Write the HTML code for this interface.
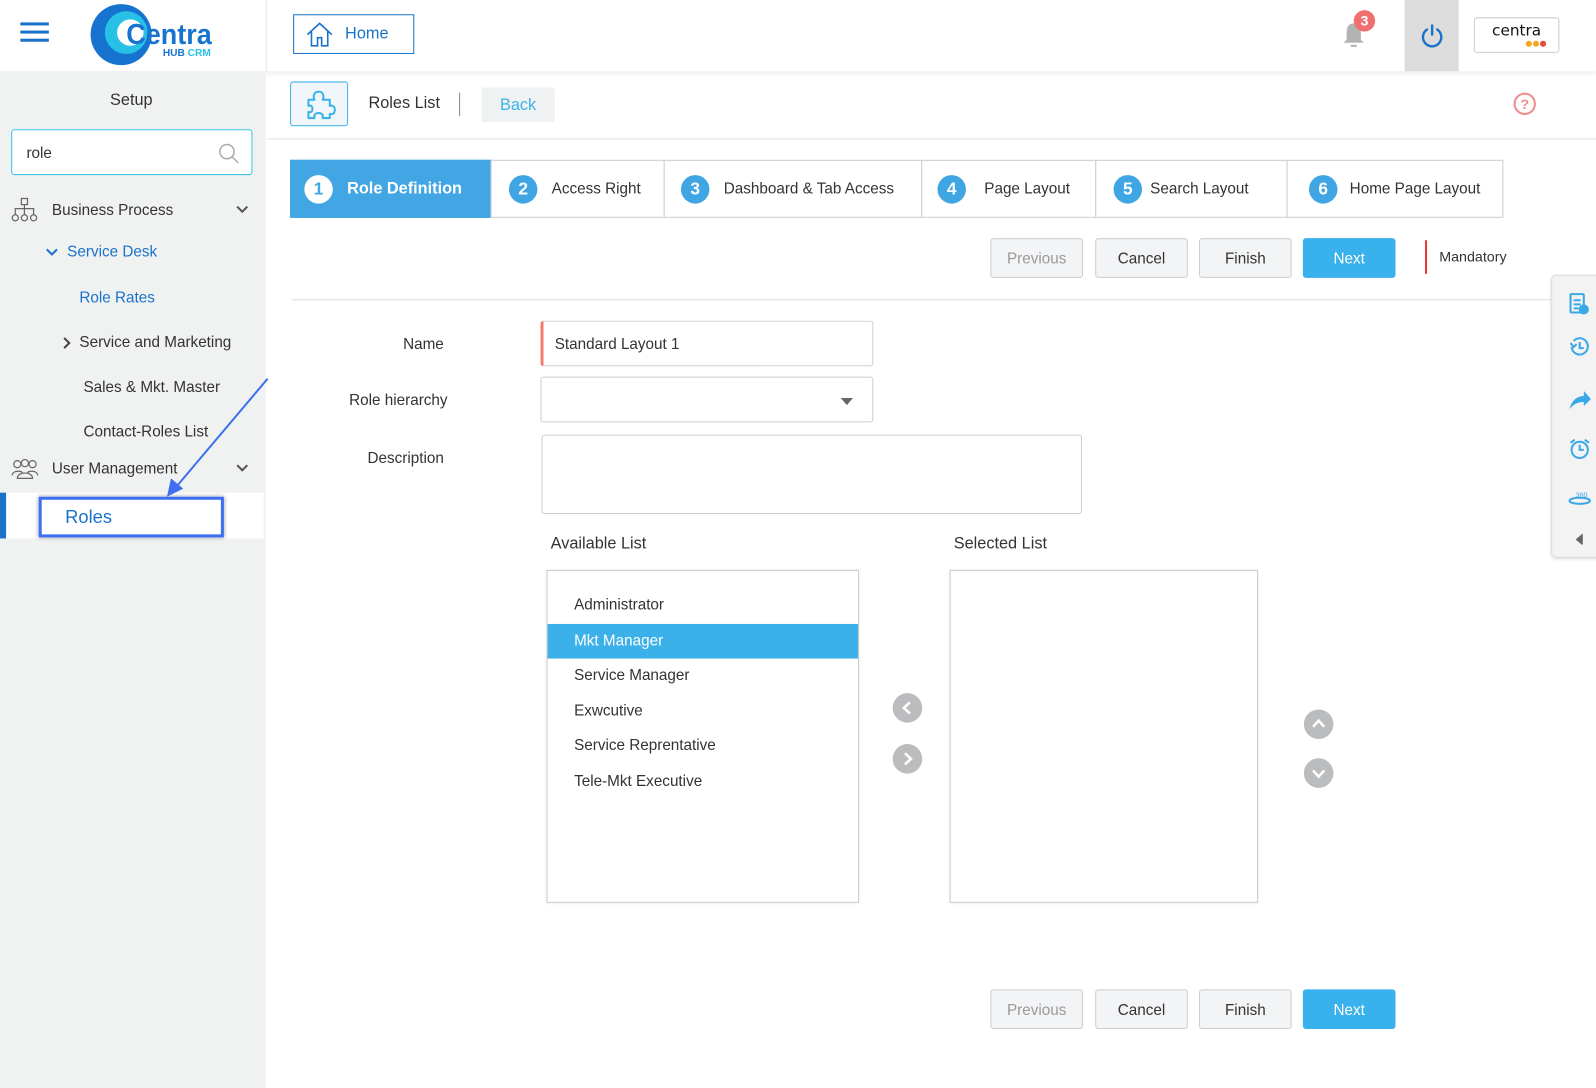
<!DOCTYPE html>
<html><head><meta charset="utf-8"><style>
html,body{margin:0;padding:0;width:1596px;height:1088px;overflow:hidden;background:#fff}
#w{position:absolute;left:0;top:0;width:1568px;height:1069px;transform:scale(1.01786);transform-origin:0 0;font-family:"Liberation Sans",sans-serif;color:#333;font-size:15px}
.a{position:absolute}
.btn{position:absolute;height:39px;width:91px;border:1px solid #ccc;border-radius:3px;background:#f3f4f6;text-align:center;line-height:39px;font-size:15px;color:#333;box-sizing:border-box}
.step{position:absolute;top:157px;height:57px;border:1px solid #ccc;box-sizing:border-box;background:#fff;display:flex;align-items:center;font-size:15px;color:#333}
.num{width:28px;height:28px;border-radius:50%;background:#3fa6e3;color:#fff;font-weight:bold;font-size:17px;display:inline-block;text-align:center;line-height:28px;margin-right:14px}
.li{position:absolute;left:26px;font-size:15px;color:#333}
.circ{position:absolute;width:29px;height:29px;border-radius:50%;background:#bbbcbe}
</style></head><body><div id="w">
<div class="a" style="left:0;top:0;width:1568px;height:70px;background:#fff;box-shadow:0 2px 5px rgba(0,0,0,.08)"></div>
<div class="a" style="left:261px;top:0;width:1px;height:70px;background:#e4e4e4"></div>
<div class="a" style="left:20px;top:22px;width:28px;height:3px;background:#1a73c9;box-shadow:0 8px 0 #1a73c9,0 16px 0 #1a73c9"></div>
<svg class="a" style="left:88px;top:2px" width="125" height="64" viewBox="0 0 125 64">
<circle cx="31" cy="32" r="30" fill="#1673cf"/><circle cx="36" cy="30" r="21" fill="#27c0e6"/><circle cx="40" cy="30" r="13" fill="#fff"/>
<text x="36" y="41" font-family="Liberation Sans" font-size="28" font-weight="bold" fill="#1673cf" textLength="84" lengthAdjust="spacingAndGlyphs">Centra</text>
<text x="72" y="53" font-family="Liberation Sans" font-size="10" font-weight="bold" fill="#1673cf">HUB <tspan fill="#27c0e6">CRM</tspan></text></svg>
<div class="a" style="left:288px;top:14px;width:119px;height:39px;border:1px solid #1a73c9;box-sizing:border-box"></div>
<svg class="a" style="left:300px;top:21px" width="28" height="26" viewBox="0 0 28 26" fill="none" stroke="#1a73c9" stroke-width="1.6"><path d="M2 13 L14 2 L26 13 M6 10 V24 H12 V16 H16 V24 H22 V10"/></svg>
<div class="a" style="left:339px;top:25px;font-size:16px;color:#1a73c9">Home</div>
<svg class="a" style="left:1318px;top:20px" width="24" height="28" viewBox="0 0 24 28"><path d="M12 3 C6 3 5 8 5 13 V19 L2 22 H22 L19 19 V13 C19 8 18 3 12 3Z M9 24 H15 V26 H9Z" fill="#b3b3b3"/></svg>
<div class="a" style="left:1330px;top:10px;width:21px;height:21px;border-radius:50%;background:#f07070;color:#fff;font-weight:bold;font-size:14px;text-align:center;line-height:21px">3</div>
<div class="a" style="left:1380px;top:0;width:53px;height:70px;background:#dcdcdc"></div>
<svg class="a" style="left:1395px;top:22px" width="24" height="26" viewBox="0 0 24 26" fill="none" stroke="#1a73c9" stroke-width="2.4" stroke-linecap="round"><path d="M12 3 V12 M7 7 A9 9 0 1 0 17 7"/></svg>
<div class="a" style="left:1448px;top:17px;width:84px;height:35px;border:1px solid #ccc;border-radius:3px;box-sizing:border-box;text-align:center">
<div style="font-size:15px;color:#111;line-height:24px;font-family:'DejaVu Sans',sans-serif">centra</div>
<div style="position:absolute;right:12px;top:22px;width:6px;height:6px;border-radius:50%;background:#f5a623;box-shadow:7px 0 0 #f5a623,14px 0 0 #e94b3c;right:26px"></div></div>
<div class="a" style="left:0;top:70px;width:261px;height:999px;background:#f0f1f1"></div>
<div class="a" style="left:0;top:90px;width:258px;text-align:center;font-size:16px;color:#333">Setup</div>
<div class="a" style="left:11px;top:127px;width:237px;height:45px;border:1px solid #3cc3e8;border-radius:3px;background:#fff;box-sizing:border-box"></div>
<div class="a" style="left:26px;top:142px;font-size:15px">role</div>
<svg class="a" style="left:214px;top:140px" width="22" height="22" viewBox="0 0 22 22" fill="none" stroke="#aaa" stroke-width="1.5"><circle cx="9" cy="9" r="7"/><path d="M14 14 L20 20"/></svg>
<svg class="a" style="left:11px;top:194px" width="26" height="24" viewBox="0 0 26 24" fill="none" stroke="#666" stroke-width="1.2"><rect x="10" y="1" width="6" height="6"/><path d="M13 7V11M4 17V11H22V17M13 11V17"/><circle cx="4" cy="20" r="3"/><circle cx="13" cy="20" r="3"/><circle cx="22" cy="20" r="3"/></svg>
<div class="a" style="left:51px;top:198px;font-size:15px">Business Process</div>
<svg class="a" style="left:232px;top:202px" width="12" height="8"><path d="M1 1 L6 6 L11 1" fill="none" stroke="#555" stroke-width="2"/></svg>
<svg class="a" style="left:45px;top:244px" width="12" height="8"><path d="M1 1 L6 6 L11 1" fill="none" stroke="#1a73c9" stroke-width="2"/></svg>
<div class="a" style="left:66px;top:239px;font-size:15px;color:#1a73c9">Service Desk</div>
<div class="a" style="left:78px;top:284px;font-size:15px;color:#1a73c9">Role Rates</div>
<svg class="a" style="left:62px;top:331px" width="8" height="12"><path d="M1 1 L6 6 L1 11" fill="none" stroke="#444" stroke-width="2"/></svg>
<div class="a" style="left:78px;top:328px;font-size:15px">Service and Marketing</div>
<div class="a" style="left:82px;top:372px;font-size:15px">Sales &amp; Mkt. Master</div>
<div class="a" style="left:82px;top:416px;font-size:15px">Contact-Roles List</div>
<svg class="a" style="left:11px;top:450px" width="27" height="22" viewBox="0 0 27 22" fill="none" stroke="#666" stroke-width="1.2"><circle cx="6" cy="6" r="3.5"/><circle cx="13.5" cy="5" r="3.5"/><circle cx="21" cy="6" r="3.5"/><path d="M1 17C1 12 11 12 11 15M16 15C16 12 26 12 26 17M6 20C6 13 21 13 21 20Z"/></svg>
<div class="a" style="left:51px;top:452px;font-size:15px">User Management</div>
<svg class="a" style="left:232px;top:456px" width="12" height="8"><path d="M1 1 L6 6 L11 1" fill="none" stroke="#555" stroke-width="2"/></svg>
<div class="a" style="left:0;top:484px;width:259px;height:45px;background:#fff"></div>
<div class="a" style="left:0;top:484px;width:6px;height:45px;background:#1a73c9"></div>
<div class="a" style="left:38px;top:488px;width:182px;height:40px;border:3px solid #3d6ff0;box-sizing:border-box;box-shadow:0 0 4px #999"></div>
<div class="a" style="left:64px;top:498px;font-size:18px;color:#1a73c9">Roles</div>
<svg class="a" style="left:160px;top:370px" width="106" height="120"><path d="M103 2 L10 112" stroke="#3d6ff0" stroke-width="2"/><path d="M4 118 L8 100 L20 110Z" fill="#3d6ff0"/></svg>
<div class="a" style="left:285px;top:80px;width:57px;height:44px;border:1px solid #3cb3e8;border-radius:3px;background:#f1f6fa;box-sizing:border-box"></div>
<svg class="a" style="left:298px;top:86px" width="32" height="32" viewBox="0 0 32 32" fill="none" stroke="#3cb3e8" stroke-width="2" stroke-linejoin="round"><path d="M5 12 H11 C9 8 11 4 15 4 C19 4 21 8 19 12 H26 V18 C29 17 31 19 31 22 C31 25 29 27 26 26 V30 H19 C20 27 18 25 15 25 C12 25 10 27 11 30 H5 V24 C8 25 9 23 9 21 C9 19 8 17 5 18Z"/></svg>
<div class="a" style="left:362px;top:93px;font-size:16px">Roles List</div>
<div class="a" style="left:451px;top:91px;width:1px;height:23px;background:#888"></div>
<div class="a" style="left:473px;top:86px;width:72px;height:34px;background:#f0f1f3;border-radius:2px;text-align:center;line-height:36px;color:#3cb3e8;font-size:16px">Back</div>
<svg class="a" style="left:1486px;top:90px" width="24" height="24" viewBox="0 0 24 24" fill="none" stroke="#f28b8b" stroke-width="2"><circle cx="12" cy="12" r="10"/><text x="12" y="17" text-anchor="middle" font-family="Liberation Sans" font-weight="bold" font-size="14" fill="#f28b8b" stroke="none">?</text></svg>
<div class="a" style="left:263px;top:136px;width:1305px;height:1px;background:#ddd"></div>
<div class="step" style="left:285px;width:198px;background:#41a6e3;border-color:#41a6e3;color:#fff;font-weight:bold;padding-left:13px;font-size:16px"><span class="num" style="background:#fff;color:#41a6e3">1</span>Role Definition</div>
<div class="step" style="left:482px;width:171px;padding-left:17px"><span class="num">2</span>Access Right</div>
<div class="step" style="left:652px;width:254px;padding-left:16px"><span class="num">3</span>Dashboard &amp; Tab Access</div>
<div class="step" style="left:905px;width:172px;padding-left:15px"><span class="num" style="margin-right:18px">4</span>Page Layout</div>
<div class="step" style="left:1076px;width:189px;padding-left:17px"><span class="num" style="margin-right:8px">5</span>Search Layout</div>
<div class="step" style="left:1264px;width:213px;padding-left:21px"><span class="num" style="margin-right:12px">6</span>Home Page Layout</div>
<div class="btn" style="left:973px;top:234px;color:#999">Previous</div>
<div class="btn" style="left:1076px;top:234px">Cancel</div>
<div class="btn" style="left:1178px;top:234px">Finish</div>
<div class="btn" style="left:1280px;top:234px;background:#38b1ec;border-color:#38b1ec;color:#fff">Next</div>
<div class="a" style="left:1400px;top:236px;width:2px;height:33px;background:#e33"></div>
<div class="a" style="left:1414px;top:244px;font-size:14px">Mandatory</div>
<div class="a" style="left:287px;top:294px;width:1250px;height:1px;background:#ddd"></div>
<div class="a" style="left:1524px;top:270px;width:50px;height:278px;background:#f3f3f3;border:1px solid #ddd;border-radius:5px;box-sizing:border-box;box-shadow:0 1px 3px rgba(0,0,0,.15)"></div>
<svg class="a" style="left:1540px;top:285px" width="24" height="250" viewBox="0 0 24 250" fill="none" stroke="#3aa8e6" stroke-width="2">
<rect x="3" y="4" width="13" height="18" rx="1"/><path d="M6 10H13M6 14H13M6 18H11"/><circle cx="16" cy="19" r="4" fill="#3aa8e6"/>
<path d="M4 56 A8 8 0 1 0 6 50 M3 52 L6 56 L9 53 M12 51V57H16"/>
<path d="M2 117 C4 108 10 104 16 104 V99 L23 107 L16 114 V110 C10 110 6 112 2 117Z" fill="#3aa8e6" stroke="none"/>
<circle cx="12" cy="157" r="8"/><path d="M12 152V157H16M3 150L7 147M21 150L17 147"/>
<path d="M2 207 C2 203 22 203 22 207 M22 207 C22 211 2 211 2 207" /><text x="8" y="204" font-size="7" fill="#3aa8e6" stroke="none" font-family="Liberation Sans">360</text>
<path d="M15 239 L8 245 L15 251Z" fill="#666" stroke="none"/></svg>
<div class="a" style="left:396px;top:330px;font-size:15px">Name</div>
<div class="a" style="left:343px;top:385px;font-size:15px">Role hierarchy</div>
<div class="a" style="left:361px;top:442px;font-size:15px">Description</div>
<div class="a" style="left:531px;top:315px;width:327px;height:45px;border:1px solid #ccc;border-left:3px solid #f47a6a;border-radius:3px;box-sizing:border-box"></div>
<div class="a" style="left:545px;top:330px;font-size:15px">Standard Layout 1</div>
<div class="a" style="left:531px;top:370px;width:327px;height:45px;border:1px solid #ccc;border-radius:3px;box-sizing:border-box"></div>
<svg class="a" style="left:826px;top:391px" width="12" height="8"><path d="M0 0H12L6 7Z" fill="#666"/></svg>
<div class="a" style="left:532px;top:427px;width:531px;height:78px;border:1px solid #ccc;border-radius:3px;box-sizing:border-box"></div>
<div class="a" style="left:541px;top:526px;font-size:16px">Available List</div>
<div class="a" style="left:937px;top:526px;font-size:16px">Selected List</div>
<div class="a" style="left:537px;top:560px;width:307px;height:327px;border:1px solid #ccc;box-sizing:border-box;box-shadow:0 0 3px rgba(0,0,0,.1)">
<div class="li" style="top:25px">Administrator</div>
<div style="position:absolute;left:0;top:52px;width:305px;height:34px;background:#3cb0e9"></div>
<div class="li" style="top:60px;color:#fff">Mkt Manager</div>
<div class="li" style="top:94px">Service Manager</div>
<div class="li" style="top:129px">Exwcutive</div>
<div class="li" style="top:163px">Service Reprentative</div>
<div class="li" style="top:198px">Tele-Mkt Executive</div>
</div>
<div class="a" style="left:933px;top:560px;width:303px;height:327px;border:1px solid #ccc;box-sizing:border-box;box-shadow:0 0 3px rgba(0,0,0,.1)"></div>
<div class="circ" style="left:877px;top:681px"></div><svg class="a" style="left:877px;top:681px" width="29" height="29"><path d="M17 9L11 14.5L17 20" fill="none" stroke="#fff" stroke-width="2.5"/></svg>
<div class="circ" style="left:877px;top:731px"></div><svg class="a" style="left:877px;top:731px" width="29" height="29"><path d="M12 9L18 14.5L12 20" fill="none" stroke="#fff" stroke-width="2.5"/></svg>
<div class="circ" style="left:1281px;top:697px"></div><svg class="a" style="left:1281px;top:697px" width="29" height="29"><path d="M9 17L14.5 11L20 17" fill="none" stroke="#fff" stroke-width="2.5"/></svg>
<div class="circ" style="left:1281px;top:745px"></div><svg class="a" style="left:1281px;top:745px" width="29" height="29"><path d="M9 12L14.5 18L20 12" fill="none" stroke="#fff" stroke-width="2.5"/></svg>
<div class="btn" style="left:973px;top:972px;color:#999">Previous</div>
<div class="btn" style="left:1076px;top:972px">Cancel</div>
<div class="btn" style="left:1178px;top:972px">Finish</div>
<div class="btn" style="left:1280px;top:972px;background:#38b1ec;border-color:#38b1ec;color:#fff">Next</div>
</div></body></html>
